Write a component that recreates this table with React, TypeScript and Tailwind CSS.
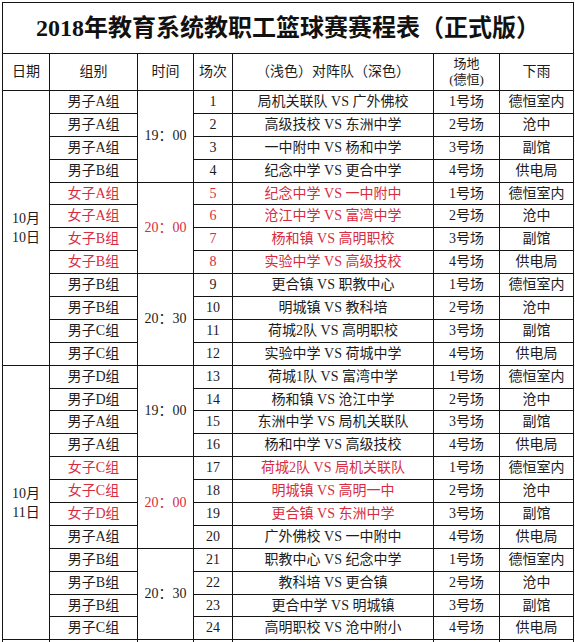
type Game = {
  no: number;
  group: string;
  match: string;
  venue: string;
  rain: string;
  red?: boolean;
  noRed?: boolean;
};

const days = [
  {
    date: ["10月", "10日"],
    slots: [
      {
        time: "19：00",
        red: false,
        games: [
          { no: 1, group: "男子A组", match: "局机关联队 VS 广外佛校", venue: "1号场", rain: "德恒室内" },
          { no: 2, group: "男子A组", match: "高级技校 VS 东洲中学", venue: "2号场", rain: "沧中" },
          { no: 3, group: "男子A组", match: "一中附中 VS 杨和中学", venue: "3号场", rain: "副馆" },
          { no: 4, group: "男子B组", match: "纪念中学 VS 更合中学", venue: "4号场", rain: "供电局" },
        ] as Game[],
      },
      {
        time: "20：00",
        red: true,
        games: [
          { no: 5, group: "女子A组", match: "纪念中学 VS 一中附中", venue: "1号场", rain: "德恒室内", red: true, noRed: true },
          { no: 6, group: "女子A组", match: "沧江中学 VS 富湾中学", venue: "2号场", rain: "沧中", red: true, noRed: true },
          { no: 7, group: "女子B组", match: "杨和镇 VS 高明职校", venue: "3号场", rain: "副馆", red: true, noRed: true },
          { no: 8, group: "女子B组", match: "实验中学 VS 高级技校", venue: "4号场", rain: "供电局", red: true, noRed: true },
        ] as Game[],
      },
      {
        time: "20：30",
        red: false,
        games: [
          { no: 9, group: "男子B组", match: "更合镇 VS 职教中心", venue: "1号场", rain: "德恒室内" },
          { no: 10, group: "男子B组", match: "明城镇 VS 教科培", venue: "2号场", rain: "沧中" },
          { no: 11, group: "男子C组", match: "荷城2队 VS 高明职校", venue: "3号场", rain: "副馆" },
          { no: 12, group: "男子C组", match: "实验中学 VS 荷城中学", venue: "4号场", rain: "供电局" },
        ] as Game[],
      },
    ],
  },
  {
    date: ["10月", "11日"],
    slots: [
      {
        time: "19：00",
        red: false,
        games: [
          { no: 13, group: "男子D组", match: "荷城1队 VS 富湾中学", venue: "1号场", rain: "德恒室内" },
          { no: 14, group: "男子D组", match: "杨和镇 VS 沧江中学", venue: "2号场", rain: "沧中" },
          { no: 15, group: "男子A组", match: "东洲中学 VS 局机关联队", venue: "3号场", rain: "副馆" },
          { no: 16, group: "男子A组", match: "杨和中学 VS 高级技校", venue: "4号场", rain: "供电局" },
        ] as Game[],
      },
      {
        time: "20：00",
        red: true,
        games: [
          { no: 17, group: "女子C组", match: "荷城2队 VS 局机关联队", venue: "1号场", rain: "德恒室内", red: true },
          { no: 18, group: "女子C组", match: "明城镇 VS 高明一中", venue: "2号场", rain: "沧中", red: true },
          { no: 19, group: "女子D组", match: "更合镇 VS 东洲中学", venue: "3号场", rain: "副馆", red: true },
          { no: 20, group: "男子A组", match: "广外佛校 VS 一中附中", venue: "4号场", rain: "供电局" },
        ] as Game[],
      },
      {
        time: "20：30",
        red: false,
        games: [
          { no: 21, group: "男子B组", match: "职教中心 VS 纪念中学", venue: "1号场", rain: "德恒室内" },
          { no: 22, group: "男子B组", match: "教科培 VS 更合镇", venue: "2号场", rain: "沧中" },
          { no: 23, group: "男子B组", match: "更合中学 VS 明城镇", venue: "3号场", rain: "副馆" },
          { no: 24, group: "男子C组", match: "高明职校 VS 沧中附小", venue: "4号场", rain: "供电局" },
        ] as Game[],
      },
    ],
  },
];

const cell = "border border-[#141414] p-0 text-center align-middle whitespace-nowrap";
const ink = "text-[#1c1c1c]";
const red = "text-[#d92b40]";

export default function App() {
  return (
    <div
      className="h-[642px] w-[575px] overflow-hidden bg-white pt-[2px] pl-[2px]"
      style={{ fontFamily: '"Liberation Serif", "Noto Sans CJK SC", serif' }}
    >
      <table className="w-[571px] table-fixed border-collapse text-[14px] leading-none">
        <colgroup>
          <col className="w-[47px]" />
          <col className="w-[88px]" />
          <col className="w-[56px]" />
          <col className="w-[39px]" />
          <col className="w-[201px]" />
          <col className="w-[66px]" />
          <col className="w-[74px]" />
        </colgroup>
        <tbody>
          <tr className="h-[51px]">
            <td colSpan={7} className={`${cell} text-[24px] font-bold text-[#111]`}>
              2018年教育系统教职工篮球赛赛程表（正式版）
            </td>
          </tr>
          <tr className={`h-[37px] ${ink}`}>
            <td className={cell}>日期</td>
            <td className={cell}>组别</td>
            <td className={cell}>时间</td>
            <td className={cell}>场次</td>
            <td className={cell}>（浅色）对阵队（深色）</td>
            <td className={`${cell} text-[13px] leading-[16px]`}>
              场地
              <br />
              (德恒)
            </td>
            <td className={cell}>下雨</td>
          </tr>
          {days.map((day) =>
            day.slots.map((slot, si) =>
              slot.games.map((g, gi) => (
                <tr key={g.no} className={`h-[22.9px] ${ink}`}>
                  {si === 0 && gi === 0 && (
                    <td rowSpan={12} className={`${cell} leading-[19px]`}>
                      {day.date[0]}
                      <br />
                      {day.date[1]}
                    </td>
                  )}
                  <td className={`${cell} ${g.red ? red : ""}`}>{g.group}</td>
                  {gi === 0 && (
                    <td rowSpan={4} className={`${cell} ${slot.red ? red : ""}`}>
                      {slot.time}
                    </td>
                  )}
                  <td className={`${cell} ${g.noRed ? red : ""}`}>{g.no}</td>
                  <td className={`${cell} ${g.red ? red : ""}`}>{g.match}</td>
                  <td className={cell}>{g.venue}</td>
                  <td className={cell}>{g.rain}</td>
                </tr>
              ))
            )
          )}
          <tr className="h-[22.9px]">
            <td className={cell} />
            <td className={cell} />
            <td className={cell} />
            <td className={cell} />
            <td className={cell} />
            <td className={cell} />
            <td className={cell} />
          </tr>
        </tbody>
      </table>
    </div>
  );
}
